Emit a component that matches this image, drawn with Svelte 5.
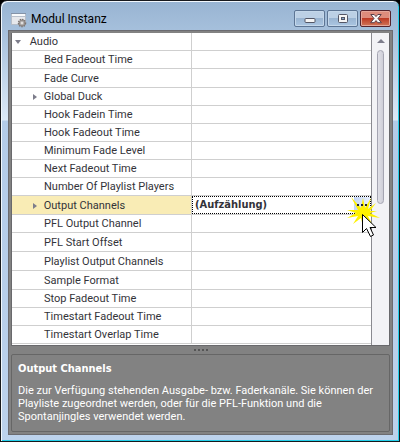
<script lang="ts">
	interface Property {
		name: string;
		value?: string;
		expandable?: boolean;
	}

	const category = 'Audio';

	const properties: Property[] = [
		{ name: 'Bed Fadeout Time' },
		{ name: 'Fade Curve' },
		{ name: 'Global Duck', expandable: true },
		{ name: 'Hook Fadein Time' },
		{ name: 'Hook Fadeout Time' },
		{ name: 'Minimum Fade Level' },
		{ name: 'Next Fadeout Time' },
		{ name: 'Number Of Playlist Players' },
		{ name: 'Output Channels', value: '(Aufzählung)', expandable: true },
		{ name: 'PFL Output Channel' },
		{ name: 'PFL Start Offset' },
		{ name: 'Playlist Output Channels' },
		{ name: 'Sample Format' },
		{ name: 'Stop Fadeout Time' },
		{ name: 'Timestart Fadeout Time' },
		{ name: 'Timestart Overlap Time' }
	];

	let selected = $state('Output Channels');
</script>

<div class="window">
	<header class="titlebar">
		<svg class="app-icon" width="18" height="16" viewBox="0 0 18 16">
			<rect x="1.5" y="1.5" width="14" height="11" fill="#e6e8ec" stroke="#b5bdc8" />
			<rect x="1" y="1" width="15" height="1" fill="#8493a8" />
			<rect x="2" y="2" width="13" height="2" fill="#f8fafc" />
			<rect x="2" y="4" width="13" height="1" fill="#b8c0cc" />
			<circle cx="12" cy="11" r="3.5" fill="#c5c3c3" stroke="#77716f" stroke-width="1.5" stroke-dasharray="1.5 .8" />
			<circle cx="12" cy="11" r="2.8" fill="#b4b1b0" stroke="#8b8583" />
			<circle cx="12" cy="11" r="1" fill="#eee" />
		</svg>
		<h1>Modul Instanz</h1>
		<button class="caption" aria-label="Minimieren">
			<svg width="12" height="12" viewBox="0 0 12 12">
				<rect x="1" y="5.5" width="10" height="4" rx="1" fill="#f5f5f5" stroke="#535666" />
			</svg>
		</button>
		<button class="caption" aria-label="Maximieren">
			<svg width="12" height="12" viewBox="0 0 12 12">
				<rect x="1.5" y="1.5" width="9" height="8" rx="1" fill="#f5f5f5" stroke="#535666" />
				<rect x="4.5" y="4.5" width="3" height="2" fill="#88a7ca" stroke="#535666" />
			</svg>
		</button>
		<button class="caption close" aria-label="Schließen">
			<svg width="12" height="12" viewBox="0 0 12 12">
				<path
					d="M.8 1.5h3.4L6 3.6l1.8-2.1h3.4L8 5.5l3.4 4.2H7.8L6 7.6 4.2 9.7H.6L4 5.5z"
					fill="#f8f8f8"
					stroke="#5a3f49"
				/>
			</svg>
		</button>
	</header>

	<main class="client">
		<div class="list">
			<table>
				<tbody>
					<tr>
						<th class="category" scope="row">
							<svg class="arrow" width="6" height="6" viewBox="0 0 6 6"><path d="M0 1h6L3 5z" /></svg>
							{category}
						</th>
						<td></td>
					</tr>
					{#each properties as property}
						<tr class:selected={property.name === selected} onclick={() => (selected = property.name)}>
							<th scope="row">
								{#if property.expandable}
									<svg class="arrow" width="6" height="6" viewBox="0 0 6 6"><path d="M1 0v6l4-3z" /></svg>
								{/if}
								{property.name}
							</th>
							<td>
								{#if property.value}
									<div class="editor">
										<span>{property.value}</span>
										<button class="more" aria-label="Bearbeiten">
											<svg width="10" height="2" viewBox="0 0 10 2">
												<path d="M0 0h2v2H0zM4 0h2v2H4zM8 0h2v2H8z" fill="#26282e" />
											</svg>
										</button>
										<svg class="pointer" width="36" height="44" viewBox="0 0 36 44">
											<path
												d="M12 13L5 0l10 11L17 1l2 10 6-10-3 11 8-6-6 8 7 0-7 2 10 5-12-2 4 8-7-6-2 9-2-9-8 6 5-8-11 2 9-5L1 13z"
												fill="#fff200"
											/>
											<path
												d="M16.5 17.5v18l4-4 4 8 3-1.5-3.5-7.5h6z"
												fill="#fff"
												stroke="#000"
											/>
										</svg>
									</div>
								{/if}
							</td>
						</tr>
					{/each}
				</tbody>
			</table>
			<div class="scrollbar">
				<svg width="8" height="4" viewBox="0 0 8 4"><path d="M4 0l4 4H0z" fill="#7d7d8b" /></svg>
				<div class="thumb"></div>
			</div>
		</div>

		<div class="splitter">
			<svg width="14" height="2" viewBox="0 0 14 2">
				<path d="M0 0h2v2H0zM4 0h2v2H4zM8 0h2v2H8zM12 0h2v2h-2z" fill="#555" />
			</svg>
		</div>

		<section class="help">
			<h2>Output Channels</h2>
			<p>
				Die zur Verfügung stehenden Ausgabe- bzw. Faderkanäle. Sie können der Playliste zugeordnet
				werden, oder für die PFL-Funktion und die Spontanjingles verwendet werden.
			</p>
		</section>
	</main>
</div>

<style>
	:global(body) {
		margin: 0;
		background: #000;
	}

	.window {
		box-sizing: border-box;
		padding: 0 6px 6px 7px;
		border: 1px solid #17191d;
		border-radius: 7px 7px 0 0;
		box-shadow:
			inset 1px 1px 0 #f2f8fd,
			inset -1px -1px 0 #22cfea;
		background: linear-gradient(
			#98b4d2 0,
			#a6c0dc 30px,
			#dce9f7 119px,
			#b3cbe8 120px,
			#bcd2ec 100%
		);
		font-family: Roboto, sans-serif;
		font-size: 11px;
		color: #333339;
	}

	.titlebar {
		display: flex;
		align-items: flex-start;
		gap: 2px;
		height: 20px;
		padding: 9px 2px 0;
	}

	.app-icon {
		margin-top: 2px;
	}

	h1 {
		flex: 1;
		margin: 0 0 0 1px;
		font-size: 12px;
		font-weight: normal;
		line-height: 18px;
		color: #000;
	}

	.caption {
		display: grid;
		place-items: center;
		box-sizing: border-box;
		width: 31px;
		height: 17px;
		padding: 0;
		border: 1px solid #5d7594;
		border-radius: 2px;
		box-shadow: inset 0 0 0 1px #c4d7ea;
		background: linear-gradient(#bcd0e5 50%, #9ab5d2 50%, #abc6e2);
	}

	.close {
		border-color: #55232c;
		box-shadow: inset 0 0 0 1px #e4a699;
		background: linear-gradient(#dd8c7c 50%, #bd3b25 50%, #d07659);
	}

	.client {
		padding: 2px;
		border: 1px solid #6b6b70;
		background: #828282;
	}

	.list {
		display: flex;
		border: 1px solid #69696c;
		border-top: 0;
		background: #fff;
	}

	table {
		flex: 1;
		table-layout: fixed;
		border-collapse: separate;
		border-spacing: 0;
		margin-bottom: 1px;
	}

	th,
	td {
		box-sizing: border-box;
		height: 18px;
		padding: 0;
		border-bottom: 1px solid #cfcfcf;
		line-height: 16px;
	}

	th {
		width: 180px;
		padding: 1px 0 0 32px;
		border-right: 1px solid #cfcfcf;
		font-weight: normal;
		text-align: left;
		white-space: nowrap;
	}

	.category {
		padding-left: 3px;
	}

	.arrow {
		width: 6px;
		margin: 0 3px 0 -12px;
		fill: #7d7d8b;
	}

	.category .arrow {
		margin: 0 6px 0 0;
	}

	tr:nth-child(3) th,
	tr:nth-child(10) th,
	tr:nth-child(12) th,
	tr:nth-child(13) th,
	tr:nth-child(14) th {
		height: 19px;
	}

	.selected th {
		background: #f9ecb5;
	}

	.editor {
		position: relative;
		display: flex;
		box-sizing: border-box;
		height: 18px;
		border: 1px dotted #000;
		padding-left: 2px;
		font-family: 'DejaVu Sans Condensed', 'DejaVu Sans', sans-serif;
		font-weight: bold;
	}

	.editor span {
		flex: 1;
	}

	.more {
		display: grid;
		place-items: center;
		width: 16px;
		padding: 0;
		border: 0;
		background: linear-gradient(90deg, #c3d6f8, #e8effc);
	}

	.more svg {
		position: relative;
		z-index: 2;
	}

	.pointer {
		position: absolute;
		top: 0;
		right: -12px;
		z-index: 1;
	}

	.scrollbar {
		display: flex;
		flex-direction: column;
		align-items: center;
		gap: 7px;
		box-sizing: border-box;
		width: 18px;
		padding-top: 6px;
		border-left: 1px solid #8a8a90;
		background: #f3f3f6;
	}

	.thumb {
		box-sizing: border-box;
		width: 7px;
		height: 154px;
		border: 1px solid #a5a5b2;
		border-radius: 4px;
		background: linear-gradient(90deg, #e0e0e7, #cfcfd8);
	}

	.splitter {
		display: grid;
		place-items: center;
		height: 8px;
	}

	.help {
		box-sizing: border-box;
		min-height: 78px;
		padding: 7px 6px;
		border: 1px solid #666;
		border-radius: 2px;
		color: #fff;
	}

	h2 {
		margin: 0 0 8px;
		font-family: 'DejaVu Sans Condensed', 'DejaVu Sans', sans-serif;
		font-size: 11px;
		line-height: 14px;
	}

	p {
		margin: 0;
		line-height: 13px;
	}
</style>
